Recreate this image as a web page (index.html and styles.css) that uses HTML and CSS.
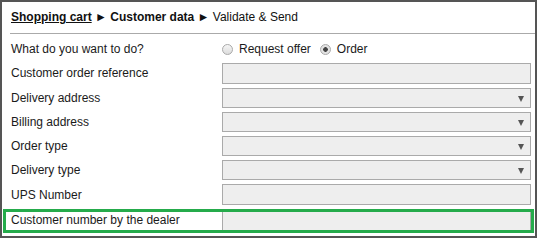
FILE: index.html
```html
<html>
<head>
<link rel="stylesheet" href="styles.css">
</head>
<body>
<div id="frame">
<div class="crumbs">
<a class="crumbDone" href="#">Shopping cart</a><span class="crumbSep"> &#9658; </span><span class="crumbCurrent">Customer data</span><span class="crumbSep"> &#9658; </span><span class="crumbNext">Validate &amp; Send</span>
</div>
<div class="form">
<div class="row radioRow">
<span class="label">What do you want to do?</span>
<label class="choice"><input type="radio" name="mode"> Request offer</label>
<label class="choice"><input type="radio" name="mode" checked> Order</label>
</div>
<div class="row textRow first">
<span class="label">Customer order reference</span>
<input class="field" type="text" readonly>
</div>
<div class="row selectRow">
<span class="label">Delivery address</span>
<span class="field dropdown"></span>
</div>
<div class="row selectRow">
<span class="label">Billing address</span>
<span class="field dropdown"></span>
</div>
<div class="row selectRow">
<span class="label">Order type</span>
<span class="field dropdown"></span>
</div>
<div class="row selectRow">
<span class="label">Delivery type</span>
<span class="field dropdown"></span>
</div>
<div class="row textRow">
<span class="label">UPS Number</span>
<input class="field" type="text" readonly>
</div>
<div class="row textRow highlighted">
<span class="label">Customer number by the dealer</span>
<input class="field" type="text" readonly>
</div>
</div>
</div>
</body>
</html>
```

FILE: styles.css
```css
body
{
	margin: 0;
	background-color: #555555;
	overflow: hidden;
}
#frame
{
	box-sizing: border-box;
	width: 537px;
	height: 238px;
	border: 2px solid #555555;
	background-color: #ffffff;
	font-family: "Liberation Sans", Arial, sans-serif;
	font-size: 12px;
	color: #1a1a1a;
}
.crumbs
{
	margin-left: 8px;
	padding-left: 1px;
	height: 31px;
	line-height: 31px;
	border-bottom: 1px solid #aaaaaa;
	color: #111111;
	white-space: nowrap;
}
.crumbDone
{
	font-weight: bold;
	color: #111111;
	text-decoration: underline;
}
.crumbSep,
.crumbCurrent
{
	font-weight: bold;
}
.form
{
	padding: 4px 4px 0 9px;
}
.row
{
	display: flex;
	align-items: center;
	height: 24px;
}
.radioRow
{
	height: 22px;
}
.textRow
{
	height: 25px;
}
.textRow.first
{
	height: 26px;
}
.highlighted
{
	height: 26px;
	margin-left: -8px;
	padding-left: 8px;
	position: relative;
}
.highlighted::after
{
	content: "";
	position: absolute;
	left: 0;
	top: 2px;
	width: 525px;
	height: 18px;
	border: 3px solid #25ab4b;
	pointer-events: none;
}
.label
{
	width: 211px;
	flex: none;
}
.choice
{
	display: flex;
	align-items: center;
	margin-right: 9px;
	color: #1a1a1a;
}
.choice input
{
	-webkit-appearance: none;
	appearance: none;
	box-sizing: border-box;
	width: 11px;
	height: 11px;
	margin: 0 6px 0 0;
	border: 1px solid #a9a9a9;
	border-radius: 50%;
	background: linear-gradient(#f6f6f6, #dcdcdc);
}
.choice input:checked
{
	background: radial-gradient(circle, #444444 0, #444444 2px, #e2e2e2 2.6px, #e2e2e2 100%);
}
.field
{
	box-sizing: border-box;
	display: block;
	width: 309px;
	margin: 0;
	padding: 0;
	border: 1px solid #aaaaaa;
	background-color: #eeeeee;
	font: inherit;
	outline: none;
}
input.field
{
	height: 21px;
}
.dropdown
{
	height: 20px;
	position: relative;
}
.dropdown::after
{
	content: "";
	position: absolute;
	right: 6px;
	top: 7px;
	border-left: 3px solid transparent;
	border-right: 3px solid transparent;
	border-top: 6px solid #555555;
}
```
